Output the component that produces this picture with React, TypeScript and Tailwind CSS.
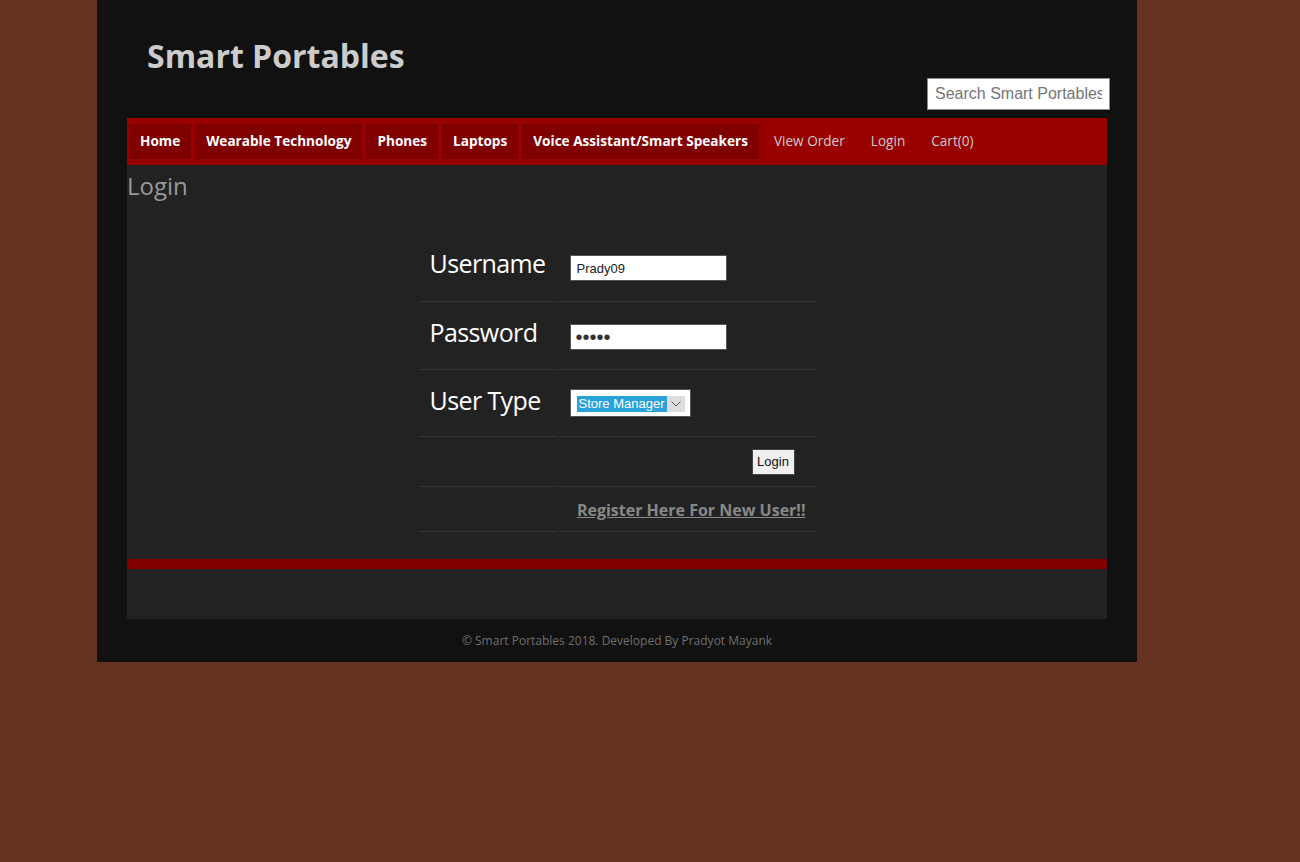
import React from "react";

const navBoxes = ["Home", "Wearable Technology", "Phones", "Laptops", "Voice Assistant/Smart Speakers"];
const navLinks = ["View Order", "Login", "Cart(0)"];

export default function App() {
  return (
    <div className="min-h-screen bg-[#663322] font-['Open_Sans',sans-serif]" style={{ minHeight: 862 }}>
      <div className="ml-[97px] w-[1040px] bg-[#111111]">
        {/* header */}
        <div className="pt-[34px]">
          <div className="pl-[50px] text-[32px] font-bold leading-[44px] text-[#cccccc]">Smart Portables</div>
          <div className="flex justify-end pr-[27px]">
            <input
              className="h-[32px] w-[183px] border border-[#8a8a8a] bg-white px-[7px] font-['Liberation_Sans',Arial,sans-serif] text-[16px] text-[#333] outline-none placeholder:text-[#757575]"
              placeholder="Search Smart Portables"
            />
          </div>
        </div>
        {/* nav */}
        <div className="mx-[30px] mt-[8px] flex h-[47px] items-center gap-[4px] bg-[#990000] pl-[2px]">
          {navBoxes.map((n) => (
            <div
              key={n}
              className="flex h-[35px] items-center border border-[#740000] bg-[#800000] px-[10px] pb-[1px] text-[13.6px] font-bold text-white"
            >
              {n}
            </div>
          ))}
          {navLinks.map((n) => (
            <div key={n} className="flex h-[35px] items-center px-[11px] pb-[1px] text-[13.6px] text-[#cccccc]">
              {n}
            </div>
          ))}
        </div>
        {/* content */}
        <div className="mx-[30px] bg-[#222222]">
          <div className="pt-[4px] text-[24px] leading-[33px] text-[#999999]">Login</div>
          <div className="mt-[31px] flex flex-col items-center">
            {/* row 1 */}
            <div className="flex gap-[2px]">
              <div className="h-[69px] w-[139px] border-b border-[#333333] pl-[11px] pt-[12px] text-[25px] leading-[36px] tracking-[-0.6px] text-white">
                Username
              </div>
              <div className="h-[69px] w-[256px] border-b border-[#333333] pl-[10px] pt-[22px]">
                <input
                  className="block h-[26px] w-[157px] border border-[#555] bg-white px-[6px] font-['Liberation_Sans',Arial,sans-serif] text-[13px] text-[#222] outline-none"
                  defaultValue="Prady09"
                />
              </div>
            </div>
            {/* row 2 */}
            <div className="flex gap-[2px]">
              <div className="h-[68px] w-[139px] border-b border-[#333333] pl-[11px] pt-[12px] text-[25px] leading-[36px] tracking-[-0.6px] text-white">
                Password
              </div>
              <div className="h-[68px] w-[256px] border-b border-[#333333] pl-[10px] pt-[22px]">
                <input
                  type="password"
                  className="block h-[26px] w-[157px] border border-[#555] bg-white px-[5px] font-['Liberation_Sans',Arial,sans-serif] text-[20px] text-[#333] outline-none"
                  defaultValue="12345"
                />
              </div>
            </div>
            {/* row 3 */}
            <div className="flex gap-[2px]">
              <div className="h-[67px] w-[139px] border-b border-[#333333] pl-[11px] pt-[12px] text-[25px] leading-[36px] tracking-[-0.6px] text-white">
                User Type
              </div>
              <div className="h-[67px] w-[256px] border-b border-[#333333] pl-[10px] pt-[19px]">
                <div className="flex h-[28px] w-[121px] items-center border border-[#555] bg-white pl-[6px] pt-[1px]">
                  <span className="flex h-[16px] items-center bg-[#28a2da] px-[2px] font-['Liberation_Sans',Arial,sans-serif] text-[13px] leading-[16px] text-white">
                    Store Manager
                  </span>
                  <span className="flex h-[16px] w-[18px] items-center justify-center bg-[#dddddd]">
                    <svg width="10" height="6" viewBox="0 0 10 6" fill="none">
                      <path d="M0.5 0.5 L5 5 L9.5 0.5" stroke="#555" strokeWidth="1" />
                    </svg>
                  </span>
                </div>
              </div>
            </div>
            {/* row 4 */}
            <div className="flex gap-[2px]">
              <div className="h-[50px] w-[139px] border-b border-[#333333]" />
              <div className="flex h-[50px] w-[256px] justify-end border-b border-[#333333] pr-[21px] pt-[12px]">
                <button className="h-[26px] w-[43px] border border-[#444] bg-[#f0f0f0] font-['Liberation_Sans',Arial,sans-serif] text-[13px] text-[#111]">
                  Login
                </button>
              </div>
            </div>
            {/* row 5 */}
            <div className="flex gap-[2px]">
              <div className="h-[45px] w-[139px] border-b border-[#333333]" />
              <div className="flex h-[45px] w-[256px] justify-end border-b border-[#333333] pr-[10px] pt-[11px]">
                <span className="text-[16px] font-bold leading-[24px] text-[#888888] underline">
                  Register Here For New User!!
                </span>
              </div>
            </div>
          </div>
          <div className="mt-[27px] h-[10px] bg-[#800000]" />
          <div className="h-[50px]" />
        </div>
        {/* footer */}
        <div className="flex h-[43px] items-center justify-center text-[12px] text-[#6f6f6f]">
          © Smart Portables 2018. Developed By Pradyot Mayank
        </div>
      </div>
    </div>
  );
}
